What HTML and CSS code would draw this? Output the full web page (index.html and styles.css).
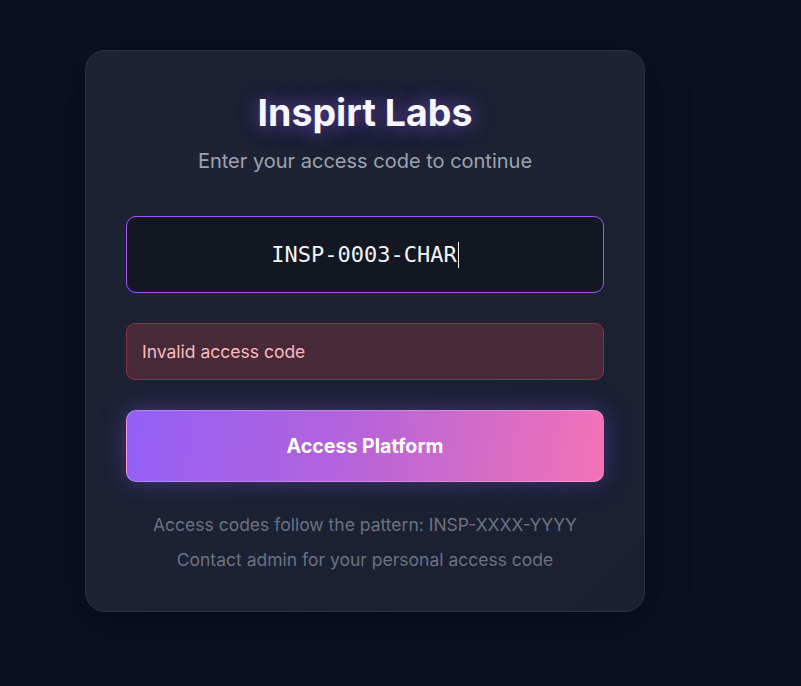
FILE: index.html
```html
<!DOCTYPE html>
<html lang="en">
<head>
<meta charset="utf-8">
<title>Inspirt Labs</title>
<link rel="stylesheet" href="styles.css">
</head>
<body>
<main class="page">
  <section class="card">
    <h1 class="title">Inspirt Labs</h1>
    <p class="subtitle">Enter your access code to continue</p>
    <form class="form">
      <div class="code-input"><span class="code-text">INSP-0003-CHAR</span><span class="caret"></span></div>
      <div class="error">Invalid access code</div>
      <button type="button" class="submit">Access Platform</button>
    </form>
    <div class="hints">
      <p class="hint">Access codes follow the pattern: INSP-XXXX-YYYY</p>
      <p class="hint">Contact admin for your personal access code</p>
    </div>
  </section>
</main>
</body>
</html>
```
FILE: styles.css
```css
* { box-sizing: border-box; }
html, body {
  margin: 0;
  height: 100%;
}
body {
  background: #0b1023;
  font-family: Inter, "Noto Sans", sans-serif;
  overflow: hidden;
}
.page {
  padding: 50px 0 0 85px;
}
.card {
  width: 560px;
  height: 562px;
  padding: 40px 40px;
  border: 1px solid #2c3247;
  border-radius: 20px;
  background: linear-gradient(135deg, #1d2133 0%, #1c2134 50%, #1a1f32 100%);
  box-shadow: 0 10px 40px rgba(0, 0, 0, 0.35);
}
.title {
  margin: 0;
  font-size: 37.5px;
  line-height: 44px;
  font-weight: 700;
  color: #f8f7ff;
  text-align: center;
  text-shadow: 0 0 18px rgba(139, 92, 246, 0.5), 0 0 30px rgba(139, 92, 246, 0.3);
}
.subtitle {
  margin: 12px 0 0;
  font-size: 20px;
  line-height: 28px;
  color: #9ca3af;
  text-align: center;
}
.form {
  margin-top: 41px;
  display: flex;
  flex-direction: column;
}
.code-input {
  height: 77px;
  border: 1px solid #a855f7;
  border-radius: 10px;
  background: #121722;
  display: flex;
  align-items: center;
  justify-content: center;
  font-family: "DejaVu Sans Mono", "Liberation Mono", monospace;
  font-size: 22px;
  color: #f3f4f6;
}
.caret {
  display: inline-block;
  width: 1px;
  height: 26px;
  background: #f3f4f6;
  margin-left: 1px;
}
.error {
  margin-top: 30px;
  height: 57px;
  padding: 0 15px;
  display: flex;
  align-items: center;
  border: 1px solid #8f3441;
  border-radius: 9px;
  background: #482937;
  color: #f9b9c0;
  font-size: 17.5px;
}
.submit {
  margin-top: 30px;
  height: 72px;
  border: 1px solid rgba(255, 255, 255, 0.25);
  border-radius: 10px;
  background: linear-gradient(100deg, #925ff5 0%, #b363dc 45%, #d46cc6 75%, #f472b6 100%);
  color: #ffffff;
  font-family: Inter, "Noto Sans", sans-serif;
  font-size: 19.6px;
  font-weight: 700;
  box-shadow: 0 0 24px rgba(139, 92, 246, 0.35);
  cursor: pointer;
}
.hints {
  margin-top: 31px;
  text-align: center;
}
.hint {
  margin: 0;
  font-size: 17.5px;
  line-height: 24px;
  color: #6b7280;
}
.hint + .hint {
  margin-top: 11px;
}
```
